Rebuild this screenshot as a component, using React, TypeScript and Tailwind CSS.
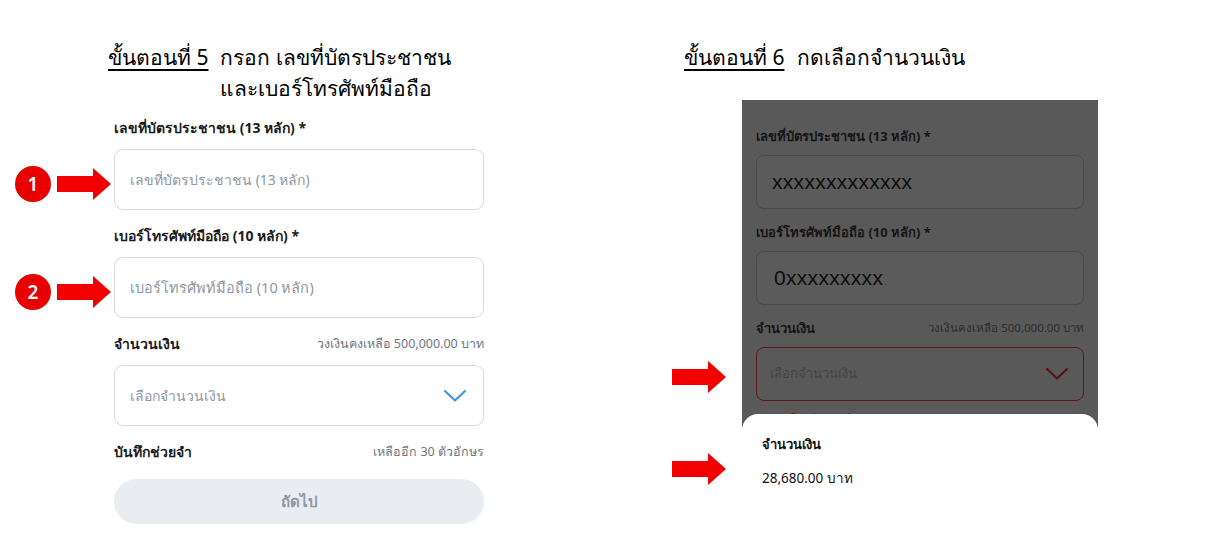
import React from "react";

const FONT = { fontFamily: '"Noto Sans", "Liberation Sans", sans-serif' };

function Arrow({ className = "" }: { className?: string }) {
  return (
    <svg width="54" height="32" viewBox="0 0 54 32" className={className}>
      <polygon points="0,8 36,8 36,0 54,16 36,32 36,24 0,24" fill="#f20000" />
    </svg>
  );
}

function Badge({ n }: { n: number }) {
  return (
    <div className="w-[36px] h-[36px] rounded-full bg-[#e60000] flex items-center justify-center text-white text-[19px] leading-none font-semibold">
      {n}
    </div>
  );
}

function Chevron({ color }: { color: string }) {
  return (
    <svg width="22" height="12" viewBox="0 0 22 12" fill="none">
      <path d="M1 1 L11 10.5 L21 1" stroke={color} strokeWidth="2" strokeLinecap="round" strokeLinejoin="round" />
    </svg>
  );
}

function LeftPanel() {
  return (
    <div className="w-[600px] shrink-0 pt-[42px]">
      <div className="flex pl-[108px] text-[21px] leading-[31px] text-black">
        <span className="underline underline-offset-[4px] decoration-[1.5px] whitespace-nowrap">ขั้นตอนที่ 5</span>
        <div className="ml-[12px] flex flex-col">
          <span>กรอก เลขที่บัตรประชาชน</span>
          <span>และเบอร์โทรศัพท์มือถือ</span>
        </div>
      </div>

      <div className="flex flex-col mt-[14px]">
        <div className="pl-[114px] text-[14px] leading-[20px] font-bold text-[#1b1b1b]">เลขที่บัตรประชาชน (13 หลัก) *</div>
        <div className="flex items-center mt-[11px]">
          <div className="w-[114px] flex items-center pl-[15px] pt-[9px]">
            <Badge n={1} />
            <Arrow className="ml-[6px]" />
          </div>
          <div className="w-[370px] h-[61px] rounded-[9px] border border-[#d5dae1] flex items-center pl-[15px] text-[14px] text-[#8e97a3]">
            เลขที่บัตรประชาชน (13 หลัก)
          </div>
        </div>

        <div className="pl-[114px] mt-[16px] text-[14px] leading-[20px] font-bold text-[#1b1b1b]">เบอร์โทรศัพท์มือถือ (10 หลัก) *</div>
        <div className="flex items-center mt-[11px]">
          <div className="w-[114px] flex items-center pl-[15px] pt-[9px]">
            <Badge n={2} />
            <Arrow className="ml-[6px]" />
          </div>
          <div className="w-[370px] h-[61px] rounded-[9px] border border-[#d5dae1] flex items-center pl-[15px] text-[14.5px] text-[#8e97a3]">
            เบอร์โทรศัพท์มือถือ (10 หลัก)
          </div>
        </div>

        <div className="ml-[114px] w-[370px] mt-[16px] flex items-center justify-between leading-[20px]">
          <span className="text-[14px] font-bold text-[#1b1b1b]">จำนวนเงิน</span>
          <span className="text-[12.5px] text-[#6f7782]">วงเงินคงเหลือ 500,000.00 บาท</span>
        </div>
        <div className="ml-[114px] mt-[11px] w-[370px] h-[61px] rounded-[9px] border border-[#d5dae1] flex items-center justify-between pl-[15px] pr-[17px] text-[14px] text-[#8e97a3]">
          <span>เลือกจำนวนเงิน</span>
          <Chevron color="#3b93df" />
        </div>

        <div className="ml-[114px] w-[370px] mt-[16px] flex items-center justify-between leading-[20px]">
          <span className="text-[14px] font-bold text-[#1b1b1b]">บันทึกช่วยจำ</span>
          <span className="text-[12.5px] text-[#6f7782]">เหลืออีก 30 ตัวอักษร</span>
        </div>
        <div className="ml-[114px] mt-[17px] w-[370px] h-[45px] rounded-full bg-[#e9ecf1] flex items-center justify-center text-[15px] font-semibold text-[#8f98a5]">
          ถัดไป
        </div>
      </div>
    </div>
  );
}

function RightPanel() {
  return (
    <div className="flex-1 pt-[42px] flex flex-col">
      <div className="flex pl-[84px] text-[21px] leading-[31px] text-black">
        <span className="underline underline-offset-[4px] decoration-[1.5px] whitespace-nowrap">ขั้นตอนที่ 6</span>
        <span className="ml-[13px]">กดเลือกจำนวนเงิน</span>
      </div>

      <div className="flex mt-[27px] flex-1">
        <div className="w-[142px] shrink-0 flex flex-col items-start pl-[72px]">
          <Arrow className="mt-[261px]" />
          <Arrow className="mt-[60px]" />
        </div>
        <div className="w-[356px] flex flex-col">
          <div className="bg-[#595959] h-[328px] px-[14px] pt-[26px] shrink-0">
            <div className="text-[13px] leading-[20px] font-bold text-[#161616]">เลขที่บัตรประชาชน (13 หลัก) *</div>
            <div className="mt-[9px] h-[54px] rounded-[8px] border border-[#4a4a4a] bg-[#5b5b5b] flex items-center pl-[15px] text-[21px] tracking-[0.3px] text-[#0e0e0e]" style={{ fontFamily: '"Liberation Sans", sans-serif' }}>
              xxxxxxxxxxxxx
            </div>
            <div className="mt-[13px] text-[13px] leading-[20px] font-bold text-[#161616]">เบอร์โทรศัพท์มือถือ (10 หลัก) *</div>
            <div className="mt-[9px] h-[54px] rounded-[8px] border border-[#4a4a4a] bg-[#5b5b5b] flex items-center pl-[17px] text-[21px] tracking-[0.3px] text-[#0e0e0e]" style={{ fontFamily: '"Liberation Sans", sans-serif' }}>
              0xxxxxxxxx
            </div>
            <div className="mt-[13px] flex items-center justify-between leading-[20px]">
              <span className="text-[13px] font-bold text-[#161616]">จำนวนเงิน</span>
              <span className="text-[11.5px] text-[#2e2e2e]">วงเงินคงเหลือ 500,000.00 บาท</span>
            </div>
            <div className="mt-[9px] h-[54px] rounded-[8px] border border-[#5e1818] flex items-center justify-between pl-[13px] pr-[15px] text-[13px] text-[#444444]">
              <span>เลือกจำนวนเงิน</span>
              <Chevron color="#5a1010" />
            </div>
            <div className="mt-[10px] text-[11px] leading-[14px] text-[#6e1c1c]">กรุณาเลือกจำนวนเงิน</div>
          </div>
          <div className="-mt-[14px] bg-white rounded-t-[16px] flex-1 px-[20px] pt-[20px] relative">
            <div className="text-[13px] leading-[20px] font-bold text-[#111]">จำนวนเงิน</div>
            <div className="mt-[14px] text-[13.5px] leading-[20px] text-[#111]">28,680.00 บาท</div>
          </div>
        </div>
      </div>
    </div>
  );
}

export default function App() {
  return (
    <div className="w-[1215px] h-[543px] bg-white flex overflow-hidden" style={FONT}>
      <LeftPanel />
      <RightPanel />
    </div>
  );
}
